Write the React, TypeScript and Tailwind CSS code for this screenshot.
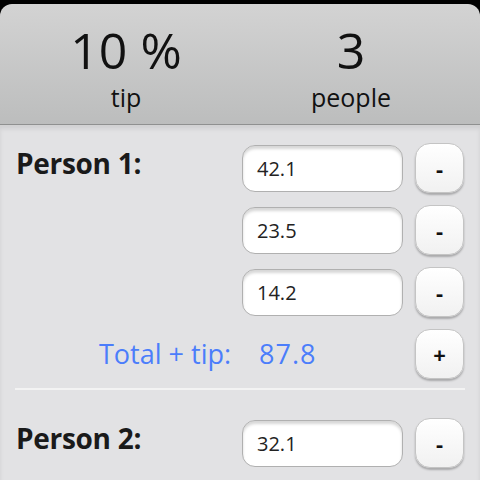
import React from "react";

const font = { fontFamily: '"Open Sans", "DejaVu Sans", sans-serif' };

function Input({ value }: { value: string }) {
  return (
    <div className="w-[161px] h-[47px] rounded-[13px] bg-white border border-[#b0b0b0] shadow-[inset_0_3px_3px_rgba(0,0,0,0.16)] flex items-center pl-[14px] pt-[2px] text-[20px] text-[#222]">
      {value}
    </div>
  );
}

function Btn({ label }: { label: string }) {
  return (
    <div className="w-[49px] h-[50px] rounded-[15px] bg-gradient-to-b from-[#ffffff] to-[#f1f1f1] border border-[#c4c4c4] shadow-[0_2px_2px_rgba(0,0,0,0.25)] flex items-center justify-center text-[22px] font-bold text-[#111] leading-none">
      {label}
    </div>
  );
}

function Row({ value, sign = "-" }: { value: string; sign?: string }) {
  return (
    <div className="flex items-center h-[50px] gap-[12px]">
      <Input value={value} />
      <Btn label={sign} />
    </div>
  );
}

export default function App() {
  return (
    <div className="w-[480px] h-[480px] bg-black overflow-hidden flex flex-col" style={font}>
      <div className="mt-[4px] h-[121px] shrink-0 rounded-t-[12px] bg-gradient-to-b from-[#d3d3d3] to-[#bcbdbd] border-b border-[#8f9090] flex text-[#111]">
        <div className="w-[252px] flex flex-col items-center pt-[22px]">
          <div className="text-[50px] leading-[48px]">10 %</div>
          <div className="text-[25px] leading-[26px] mt-[10px]">tip</div>
        </div>
        <div className="w-[198px] flex flex-col items-center pt-[22px]">
          <div className="text-[50px] leading-[48px]">3</div>
          <div className="text-[25px] leading-[26px] mt-[10px]">people</div>
        </div>
      </div>
      <div className="flex-1 bg-[#e2e2e4] shadow-[inset_0_4px_4px_rgba(0,0,0,0.08)] pt-[18px]">
        <div className="flex">
          <div className="w-[242px] pl-[16px] pt-[2px] text-[28px] font-bold tracking-[-0.3px] text-[#1a1a1a] leading-[36px]">Person 1:</div>
          <div className="flex flex-col gap-[12px]">
            <Row value="42.1" />
            <Row value="23.5" />
            <Row value="14.2" />
          </div>
        </div>
        <div className="flex items-center h-[48px] mt-[13px]">
          <div className="w-[415px] flex text-[#4b7dfb] text-[27px]">
            <span className="ml-[99px]">Total + tip:</span>
            <span className="ml-[28px] tracking-[1px]">87.8</span>
          </div>
          <Btn label="+" />
        </div>
        <div className="mx-[15px] mt-[10px] h-[2px] bg-[#f3f3f3]" />
        <div className="flex mt-[28px]">
          <div className="w-[242px] pl-[16px] pt-[2px] text-[28px] font-bold tracking-[-0.3px] text-[#1a1a1a] leading-[36px]">Person 2:</div>
          <div className="flex flex-col gap-[12px]">
            <Row value="32.1" />
          </div>
        </div>
      </div>
    </div>
  );
}
